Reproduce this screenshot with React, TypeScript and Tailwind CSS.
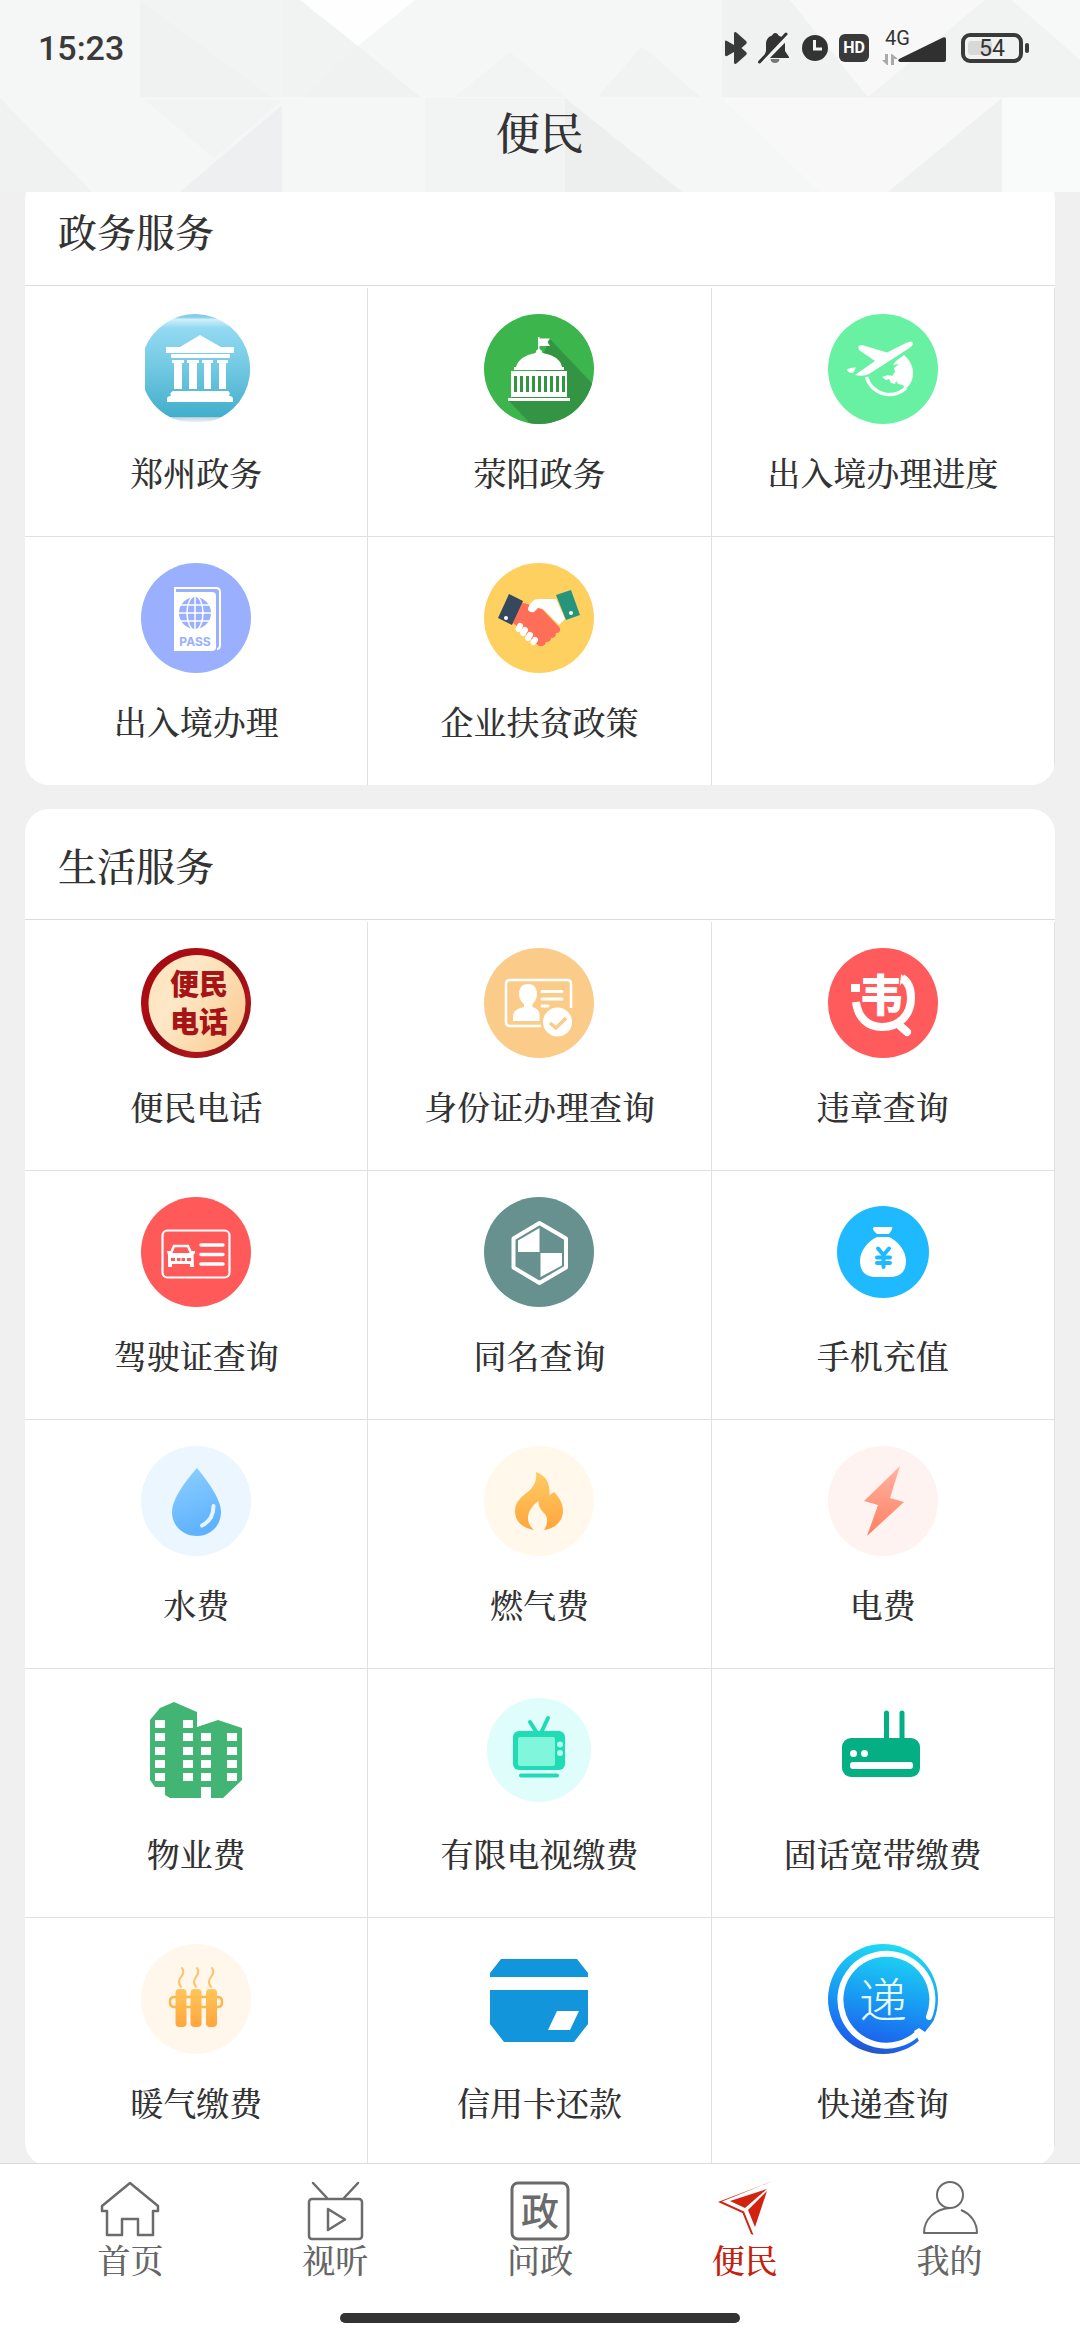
import type { ReactNode } from "react";

type Service = { label: string; icon: ReactNode };

const govServices: Service[] = [
  { label: "郑州政务", icon: <TempleIcon /> },
  { label: "荥阳政务", icon: <CapitolIcon /> },
  { label: "出入境办理进度", icon: <PlaneIcon /> },
  { label: "出入境办理", icon: <PassportIcon /> },
  { label: "企业扶贫政策", icon: <HandshakeIcon /> },
];

const lifeServices: Service[] = [
  { label: "便民电话", icon: <HotlineIcon /> },
  { label: "身份证办理查询", icon: <IdCardIcon /> },
  { label: "违章查询", icon: <ViolationIcon /> },
  { label: "驾驶证查询", icon: <LicenseIcon /> },
  { label: "同名查询", icon: <ShieldIcon /> },
  { label: "手机充值", icon: <MoneyBagIcon /> },
  { label: "水费", icon: <WaterIcon /> },
  { label: "燃气费", icon: <GasIcon /> },
  { label: "电费", icon: <PowerIcon /> },
  { label: "物业费", icon: <BuildingIcon /> },
  { label: "有限电视缴费", icon: <TvIcon /> },
  { label: "固话宽带缴费", icon: <RouterIcon /> },
  { label: "暖气缴费", icon: <HeatingIcon /> },
  { label: "信用卡还款", icon: <CreditCardIcon /> },
  { label: "快递查询", icon: <ExpressIcon /> },
];

const tabs = [
  { label: "首页", icon: <HomeTabIcon />, active: false },
  { label: "视听", icon: <VideoTabIcon />, active: false },
  { label: "问政", icon: <PoliticsTabIcon />, active: false },
  { label: "便民", icon: <ServiceTabIcon />, active: true },
  { label: "我的", icon: <MineTabIcon />, active: false },
];

export default function App() {
  return (
    <div className="flex h-screen flex-col overflow-hidden bg-[#f0f0f0] font-['Noto_Serif_CJK_SC','Noto_Sans_CJK_SC',serif] font-medium text-[#333]">
      <Header />
      <main className="min-h-0 flex-1 overflow-hidden px-[25px]">
        {/* list is scrolled a little, the first card starts under the header */}
        <div className="-mt-[17px] flex flex-col gap-6">
          <ServiceCard title="政务服务" items={govServices} />
          <ServiceCard title="生活服务" items={lifeServices} />
        </div>
      </main>
      <TabBar />
    </div>
  );
}

function Header() {
  return (
    <header className="relative z-10 h-48 shrink-0 bg-[#f5f6f6]">
      <HeaderPattern />
      <div className="relative flex h-24 items-center justify-between pl-[38px] pr-[51px]">
        <span className="font-[Roboto,sans-serif] text-[34px] font-medium leading-none text-[#3a3a3a]">15:23</span>
        <StatusIcons />
      </div>
      <h1 className="relative flex h-[70px] items-center justify-center text-[44px] leading-none">便民</h1>
    </header>
  );
}

function HeaderPattern() {
  return (
    <svg className="absolute inset-0 h-full w-full" viewBox="0 0 1080 192" preserveAspectRatio="none" aria-hidden="true">
      <g opacity="0.700">
        <path d="M140 0L272 97H140Z" fill="#eff0f0" />
        <path d="M282 0H300L358 46L303 97H282Z" fill="#f0f1f1" />
        <path d="M140 0H282V97H272Z" fill="#f2f3f3" />
        <path d="M358 46L420 97H303Z" fill="#eeefef" />
        <path d="M510 52L565 97H455Z" fill="#f1f2f2" />
        <path d="M642 46L700 97H598Z" fill="#f0f1f1" />
        <path d="M565 0H722V97Z" fill="#f6f7f7" />
        <path d="M722 0H790L868 97H722Z" fill="#eff0f0" />
        <path d="M790 0H985L868 97Z" fill="#fafafa" />
        <path d="M985 0L868 97H1080V60L1012 0Z" fill="#f0f1f1" />
        <path d="M1012 0H1080V60Z" fill="#f9f9f9" />
        <path d="M0 98L92 192H0Z" fill="#eff0f0" />
        <path d="M145 100H282L214 158Z" fill="#f1f2f2" />
        <path d="M282 105V192H180Z" fill="#ecedee" />
        <path d="M425 98H565V192H425Z" fill="#f2f3f3" />
        <path d="M565 98L682 192H565Z" fill="#eaebec" />
        <path d="M722 98H862L1002 98L888 192H820Z" fill="#fafafa" />
        <path d="M1002 98V192H888Z" fill="#edeeee" />
        <path d="M1002 98H1080V192H1002Z" fill="#fcfcfc" />
      </g>
      <path d="M300 0H415L358 46Z" fill="#fefefe" />
    </svg>
  );
}

function StatusIcons() {
  return (
    <div className="flex items-center font-[Roboto,sans-serif] font-normal text-[#333]">
      <svg className="mr-2.5 h-8 w-[23px]" viewBox="0 0 23 32" fill="#3a3a3a" aria-label="蓝牙">
        <path d="M9 1Q10 -1 12 1L21 9Q22.500 10.500 21 12L16.500 16L21 20Q22.500 21.500 21 23L12 31Q10 33 9 31V20L2 24Q0 24.500 0 23V9.500Q0 8 2 9L9 13Z" />
      </svg>
      <svg className="mr-3 h-8 w-8" viewBox="0 0 32 32" fill="#333" aria-label="静音">
        <path d="M17 1C19 1 20 2 20.500 3.500C25 5 27 8 27 13V19L31 25V26H6V25L8 19V12C8 7 11 4.500 14 3.500Q15 1 17 1Z" />
        <path d="M12.500 27H21.500Q21 31 17 31Q13 31 12.500 27Z" fill="#777" />
        <path d="M3 31.500L30 4" stroke="#f3f4f4" strokeWidth="5" />
        <path d="M1.500 30L28 2" stroke="#333" strokeWidth="3" strokeLinecap="round" />
      </svg>
      <svg className="mr-[11px] h-[26px] w-[26px]" viewBox="0 0 26 26" fill="none" aria-label="闹钟">
        <circle cx="13" cy="13" r="13" fill="#333" />
        <path d="M12.500 5V14H20" stroke="#f4f4f4" strokeWidth="3" />
      </svg>
      <span className="mr-3 flex h-7 w-[30px] items-center justify-center rounded-[6px] bg-[#3a3a3a] text-base font-bold leading-none text-white">
        HD
      </span>
      <span className="relative mr-[14px] block h-9 w-[66px]">
        <svg className="h-9 w-[66px]" viewBox="0 0 66 36" aria-hidden="true">
          <path d="M18 29L62 7.500Q65 6.500 65 9V30Q65 32 63 32H19Q16 31 18 29Z" fill="#303030" />
          <path d="M4 24H7V35H6L1 30H4ZM10 35V24H11L17 29H13V35Z" fill="#aaa" />
        </svg>
        <span className="absolute left-1 top-0 text-xl leading-4">4G</span>
      </span>
      <span className="relative flex h-[30px] w-[62px] items-center justify-center rounded-[9px] border-4 border-[#3a3a3a]">
        <span className="absolute inset-y-1 left-[3px] w-6 rounded-[3px] bg-[#d8d8d8]" />
        <span className="relative text-[23px] leading-none">54</span>
      </span>
      <span className="ml-0.5 h-[10px] w-1 rounded-[2px] bg-[#3a3a3a]" />
    </div>
  );
}

function ServiceCard({ title, items }: { title: string; items: Service[] }) {
  const blanks = (3 - (items.length % 3)) % 3;
  const lastRow = items.length + blanks - 3;

  return (
    <section className="overflow-hidden rounded-3xl bg-white">
      <div className="mb-0.5 border-b border-[#dcdcdc]">
        <h2 className="flex h-[110px] items-center px-[33px] text-[39px] leading-none">{title}</h2>
      </div>
      <div className="grid grid-cols-3">
        {items.map((item, i) => (
          <a
            key={item.label}
            href="#"
            className={`flex flex-col items-center border-r border-[#e0e0e0] pb-10 pt-[26px] ${i < lastRow ? "border-b" : ""}`}
          >
            <span className="block h-[110px] w-[110px]">{item.icon}</span>
            <span className="mt-6 whitespace-nowrap text-[33px] leading-[48px]">{item.label}</span>
          </a>
        ))}
        {Array.from({ length: blanks }, (_, i) => (
          <div key={i} className="border-r border-[#e0e0e0]" />
        ))}
      </div>
    </section>
  );
}

function TabBar() {
  return (
    <footer className="z-10 shrink-0 border-t border-[#d8dcdd] bg-white pb-[17px]">
      <nav className="flex px-7 pt-[17px]">
        {tabs.map((tab) => (
          <a
            key={tab.label}
            href="#"
            className={`flex flex-1 flex-col items-center ${tab.active ? "text-[#c9200e]" : "text-[#666]"}`}
          >
            {tab.icon}
            <span className="text-[33px] leading-9">{tab.label}</span>
          </a>
        ))}
      </nav>
      <div className="mx-auto mt-9 h-[10px] w-[400px] rounded-full bg-[#333]" />
    </footer>
  );
}

/* service icons, all on a 110 x 110 board */

function Board({ children }: { children: ReactNode }) {
  return (
    <svg className="h-full w-full" viewBox="0 0 110 110" fill="none" aria-hidden="true">
      {children}
    </svg>
  );
}

function TempleIcon() {
  return (
    <Board>
      <defs>
        <linearGradient id="temple" x1="0" y1="0" x2="0" y2="1">
          <stop offset="0" stopColor="#86c9e0" />
          <stop offset="0.030" stopColor="#86cfe8" />
          <stop offset="0.050" stopColor="#d0effa" />
          <stop offset="0.130" stopColor="#93d9f2" />
          <stop offset="0.500" stopColor="#72c8e2" />
          <stop offset="0.950" stopColor="#42aecb" />
          <stop offset="0.960" stopColor="#c4d8e2" />
          <stop offset="1" stopColor="#e8eef4" />
        </linearGradient>
      </defs>
      <path d="M55 0A55 55 0 0 1 77 105Q70 108 55 108Q40 108 33 105A55 55 0 0 1 4 76V34A55 55 0 0 1 55 0Z" fill="url(#temple)" />
      <g fill="#fff">
        <path d="M59 21L80 33H93V39H25V33H39Z" />
        <rect x="30" y="40" width="59" height="4" rx="1" />
        <path d="M31 46H43V49H41V75H33V49H31ZM46 46H58V49H56V75H48V49H46ZM61 46H72V49H70V75H63V49H61ZM76 46H87V49H85V75H78V49H76Z" />
        <path d="M32 77H87Q90 79 88 82Q92 82 92 85V88H26V85Q26 82 30 82Q28 79 32 77Z" />
      </g>
    </Board>
  );
}

function CapitolIcon() {
  const slots = [30, 36, 42, 48, 54, 60, 66, 72, 78];
  return (
    <Board>
      <clipPath id="capitolClip">
        <circle cx="55" cy="55" r="55" />
      </clipPath>
      <circle cx="55" cy="55" r="55" fill="#3cb54d" />
      <path d="M66 25L120 82V120H56L25 87L50 60Z" fill="#339444" clipPath="url(#capitolClip)" />
      <g fill="#fff">
        <path d="M54 23H55.500V24.500H66L63.500 28L66 32H55.500V35Q58 36 58.500 39Q76 42 78 53H80V56H30V53H32Q35 42 51.500 39Q52 36 54 35Z" />
        <path d="M27 57H83V83H27Z" />
        <path d="M24 84H86V87H24Z" />
      </g>
      {slots.map((x) => (
        <rect key={x} x={x} y="62" width="3" height="16" fill="#339444" />
      ))}
    </Board>
  );
}

function PlaneIcon() {
  return (
    <Board>
      <circle cx="55" cy="55" r="55" fill="#69f1a3" />
      <path d="M38.500 63A24 24 0 0 0 78 74" stroke="#fff" strokeWidth="3.500" />
      <path d="M76 41C85 48 88 61 82 70Q80 73 77 75L75 71L70 70L68 67L67 70L63 69L61 65L58 66L54 63L60 61L64 62L67 58L66 54L71 50L65 51L68 47Z" fill="#fff" />
      <g fill="#fff">
        <path d="M27 61L47 47L31 36Q29 31 34 31L59 38.500L78 29Q84 26 85 29Q85 32 80 35L41 60Q36 63 27 61Z" />
        <path d="M19 56Q19 54 28 53.500L25 59Q20 59 19 56Z" />
      </g>
    </Board>
  );
}

function PassportIcon() {
  return (
    <Board>
      <circle cx="55" cy="55" r="55" fill="#9ab0ff" />
      <path d="M34 29V25H75Q79 25 79 29V82Q79 86 76 86" stroke="#fff" strokeWidth="2" />
      <path d="M33 29H71Q75 29 75 33V84Q75 88 71 88H33Z" fill="#fff" />
      <circle cx="54" cy="50" r="16" fill="#9ab0ff" />
      <g stroke="#fff" strokeWidth="1.500">
        <path d="M37 50H71M39 42H69M39 58H69M54 33V67" />
        <ellipse cx="54" cy="50" rx="8" ry="17" />
      </g>
      <text x="54" y="83" textAnchor="middle" fontSize="12" fontWeight="700" fontFamily="Inter, sans-serif" fill="#9ab0ff">
        PASS
      </text>
    </Board>
  );
}

function HandshakeIcon() {
  return (
    <Board>
      <circle cx="55" cy="55" r="55" fill="#fed05f" />
      <path d="M36 39L50 43L58 46L76 65Q77 70 72 70Q72 75 67 75Q67 79 62 79Q61 84 55 83L34 64L29 60Z" fill="#ff6f57" />
      <path d="M50 37Q52 36 55 36H72L81 56L75 62L59 46L54 45L50 49Q46 50 44 47Q44 42 50 37Z" fill="#fff" />
      <path d="M25 31L39 38L28 62L14 55Z" fill="#34495e" />
      <path d="M72 32L87 27L96 52L82 57Z" fill="#27957c" />
      <circle cx="22" cy="55" r="2" fill="#fff" />
      <circle cx="87" cy="50" r="2" fill="#fff" />
      <g stroke="#fff" strokeWidth="6" strokeLinecap="round">
        <path d="M36 63L34.500 66M41 67L39 70M46 72L44 75M51 77L49.500 79" />
      </g>
    </Board>
  );
}

function HotlineIcon() {
  return (
    <Board>
      <defs>
        <linearGradient id="hotRing" x1="0" y1="0" x2="1" y2="1">
          <stop offset="0" stopColor="#980b0e" />
          <stop offset="0.300" stopColor="#b00d14" />
          <stop offset="0.500" stopColor="#8d0d10" />
          <stop offset="0.700" stopColor="#b2141a" />
          <stop offset="1" stopColor="#6e1010" />
        </linearGradient>
        <linearGradient id="hotFace" x1="0" y1="0" x2="1" y2="0.600">
          <stop offset="0" stopColor="#fee3bb" />
          <stop offset="0.400" stopColor="#fee8c8" />
          <stop offset="1" stopColor="#fbd09a" />
        </linearGradient>
      </defs>
      <circle cx="55" cy="55" r="55" fill="url(#hotRing)" />
      <circle cx="56" cy="55.500" r="48.500" fill="url(#hotFace)" />
      <text fontFamily="'Noto Sans CJK SC', sans-serif" fontSize="29" fontWeight="900" fill="#a61416">
        <tspan x="29" y="47">便民</tspan>
        <tspan x="29" y="85">电话</tspan>
      </text>
    </Board>
  );
}

function IdCardIcon() {
  return (
    <Board>
      <circle cx="55" cy="55" r="55" fill="#fbcc89" />
      <path d="M57 78H26Q22 78 22 74V36Q22 32 26 32H83Q87 32 87 36V60" stroke="#fff" strokeWidth="2.500" />
      <g fill="#fff">
        <path d="M44 36C50 36 53 40 53 46C53 51 50 55 48.500 56V59Q55 61 55.500 66V73H29V67Q30 61 40 59V56C37 54 35 50 35 46C35 40 38 36 44 36Z" />
        <circle cx="73.500" cy="74" r="14.500" />
      </g>
      <path d="M58 43.500H78M58 51H78M58 58H64" stroke="#fff" strokeWidth="3" strokeLinecap="round" />
      <path d="M66 75L72 80L82 70" stroke="#fbcc89" strokeWidth="3.500" />
    </Board>
  );
}

function ViolationIcon() {
  return (
    <Board>
      <circle cx="55" cy="55" r="55" fill="#ff5a5c" />
      <path d="M23 36H32V44H23Z" fill="#fff" />
      <path d="M28 54C30 70 40 79 54 79C72 79 83 66 83 50C83 40 79 33 74 30" stroke="#fff" strokeWidth="8" />
      <path d="M73 26L77 30L72 38Z" fill="#fff" />
      <path d="M70 76L79 84" stroke="#fff" strokeWidth="8" strokeLinecap="round" />
      <text x="53" y="64" textAnchor="middle" fontFamily="'Noto Sans CJK SC', sans-serif" fontSize="44" fontWeight="900" fill="#fff">
        韦
      </text>
    </Board>
  );
}

function LicenseIcon() {
  return (
    <Board>
      <circle cx="55" cy="55" r="55" fill="#ff5959" />
      <rect x="21.500" y="33.500" width="67" height="47" rx="5" stroke="#fff" strokeWidth="2.200" />
      <path d="M60 48H82M60 57.500H82M60 67H82" stroke="#fff" strokeWidth="3.500" strokeLinecap="round" />
      <path d="M30 56L33 49H47L50 56" stroke="#fff" strokeWidth="2.500" />
      <path d="M26 54H30V56H50V54H54V56L52.500 58L53 70H49V67H31V70H27V58Z" fill="#fff" />
      <path d="M30 61H34V64H30ZM36 61H44V64H36ZM46 61H50V64H46Z" fill="#ff5959" />
      <path d="M40 60V65" stroke="#fff" />
    </Board>
  );
}

function ShieldIcon() {
  return (
    <Board>
      <circle cx="55" cy="55" r="55" fill="#66918e" />
      <path d="M55.500 26L82 41.500V70.500L55.500 86L29.500 70.500V41.500Z" stroke="#fff" strokeWidth="4" strokeLinejoin="round" />
      <path d="M55.500 31V55H34V43.500ZM56.500 56H78V68.500L56.500 80Z" fill="#fff" />
    </Board>
  );
}

function MoneyBagIcon() {
  return (
    <Board>
      <circle cx="55" cy="55" r="46" fill="#1fb9ff" />
      <path d="M46 30H64Q65 31 63 34L61 37H49L46 34Q44 31 46 30ZM49 40H61C70 44 78 54 78 64C78 75 72 80 62 80H48C38 80 32 75 32 64C32 54 40 44 49 40Z" fill="#fff" />
      <path d="M50 51.500L55.500 58L61 51.500M55.500 58V70M49 60.500H62M49 66H62" stroke="#1fb9ff" strokeWidth="4" strokeLinecap="round" />
    </Board>
  );
}

function WaterIcon() {
  return (
    <Board>
      <linearGradient id="water" x1="0" y1="0" x2="0.300" y2="1">
        <stop offset="0" stopColor="#8fd0ff" />
        <stop offset="1" stopColor="#5fb2ff" />
      </linearGradient>
      <circle cx="55" cy="55" r="55" fill="#ebf6ff" />
      <path d="M56 22C64 32 80 52 80 66C80 80 69 90 56 90C42 90 31 80 31 66C31 52 47 32 56 22Z" fill="url(#water)" />
      <path d="M72.500 60C72.500 69 68 76 61 79.500" stroke="#e6f5ff" strokeWidth="4" strokeLinecap="round" />
    </Board>
  );
}

function GasIcon() {
  return (
    <Board>
      <linearGradient id="gas" x1="0" y1="0" x2="0" y2="1">
        <stop offset="0" stopColor="#ffcb66" />
        <stop offset="1" stopColor="#ffa63c" />
      </linearGradient>
      <circle cx="55" cy="55" r="55" fill="#fff8eb" />
      <path d="M52 26C62 30 66 36 65.500 49L70 46C76 52 79 58 79 65C79 75 71 83 60 84C64 78 64 72 61 68C58 65 54 61 54.500 55C49 59 44 65 44 72C44 77 46 80 50 84C38 82 31 75 31 65C31 55 38 51 46 44C51 39 53 33 52 26Z" fill="url(#gas)" />
    </Board>
  );
}

function PowerIcon() {
  return (
    <Board>
      <linearGradient id="power" x1="0" y1="0" x2="0" y2="1">
        <stop offset="0" stopColor="#ffb3a4" />
        <stop offset="1" stopColor="#ff7f60" />
      </linearGradient>
      <circle cx="55" cy="55" r="55" fill="#fff3f1" />
      <path d="M72 20L62 52L76 56L39 90L50 59L36 55Z" fill="url(#power)" />
    </Board>
  );
}

function BuildingIcon() {
  const rows = [25, 38, 52, 65, 78];
  return (
    <Board>
      <path d="M33 7L56 17V32L77 25L101 33V85L82 103H70V92H60V103H29L24 100V92H14L9 85V25L19 13Z" fill="#42b473" />
      {rows.map((y, i) => (
        <g key={y} fill="#fff">
          <path d={`M14 ${y}h10v8h-10zM42 ${y}h10v8h-10z`} />
          {i > 0 && <path d={`M60 ${y}h10v8h-10zM86 ${y}h10v8h-10z`} />}
        </g>
      ))}
    </Board>
  );
}

function TvIcon() {
  return (
    <Board>
      <circle cx="55" cy="55" r="52" fill="#defdfb" />
      <path d="M46 27L53 38M64 23L57 38" stroke="#1fdcb5" strokeWidth="4" strokeLinecap="round" />
      <rect x="29" y="36" width="52" height="39" rx="6" fill="#1fdcb5" />
      <rect x="34" y="42" width="37" height="29" rx="2" fill="#80f6dc" />
      <circle cx="76" cy="49.500" r="3" fill="#b0fbec" />
      <circle cx="76" cy="58" r="3" fill="#b0fbec" />
      <path d="M37 80.500H73" stroke="#1fdcb5" strokeWidth="4" strokeLinecap="round" />
    </Board>
  );
}

function RouterIcon() {
  return (
    <Board>
      <path d="M58.500 18V45M74 18V45" stroke="#04af83" strokeWidth="5" strokeLinecap="round" />
      <rect x="14" y="43" width="78" height="39" rx="9" fill="#04af83" />
      <circle cx="25.500" cy="58.500" r="3.500" fill="#fff" />
      <circle cx="36.500" cy="58.500" r="3.500" fill="#fff" />
      <rect x="22" y="67" width="63" height="7" rx="3" fill="#fff" />
    </Board>
  );
}

function HeatingIcon() {
  return (
    <Board>
      <linearGradient id="heat" x1="0" y1="0" x2="0" y2="1">
        <stop offset="0" stopColor="#ffc65a" />
        <stop offset="1" stopColor="#ffa53c" />
      </linearGradient>
      <circle cx="55" cy="55" r="55" fill="#fff7eb" />
      <path d="M34 53H33Q29 53 29 58Q29 63 33 63H77Q81 63 81 58Q81 53 77 53H34Z" stroke="#ffb64e" strokeWidth="2.500" />
      <g fill="url(#heat)">
        <rect x="34.500" y="45" width="11" height="38" rx="4" />
        <rect x="49.500" y="45" width="11" height="38" rx="4" />
        <rect x="65" y="45" width="11" height="38" rx="4" />
      </g>
      <path d="M41 24Q44 28 40 33Q36 38 40 43M56 24Q59 28 55 33Q51 38 55 43M71 24Q74 28 70 33Q66 38 70 43" stroke="#ffc164" strokeWidth="2" strokeLinecap="round" />
    </Board>
  );
}

function CreditCardIcon() {
  return (
    <Board>
      <path d="M17 15H93L104 29V33H6V29ZM6 46H104V80L90 98H20L6 80Z" fill="#1295db" />
      <path d="M73 67H95L86 86H64Z" fill="#fff" />
    </Board>
  );
}

function ExpressIcon() {
  return (
    <Board>
      <linearGradient id="express" x1="0.600" y1="0" x2="0.400" y2="1">
        <stop offset="0" stopColor="#1fdcf3" />
        <stop offset="0.500" stopColor="#189cf3" />
        <stop offset="0.900" stopColor="#1b62ee" />
        <stop offset="1" stopColor="#2a55b8" />
      </linearGradient>
      <circle cx="55" cy="55" r="55" fill="url(#express)" />
      <path d="M101 73A46 46 0 1 0 89 90" stroke="#fff" strokeWidth="6" strokeLinecap="round" />
      <path d="M91 97L86 87L91 84L97 88L104 79L112 70V102H94Z" fill="#fff" />
      <text x="55" y="74" textAnchor="middle" fontFamily="'Noto Sans CJK SC', sans-serif" fontSize="48" fontWeight="300" fill="#e9fbff">
        递
      </text>
    </Board>
  );
}

/* tab bar icons */

function TabSvg({ children }: { children: ReactNode }) {
  return (
    <svg className="h-[60px] w-[60px]" viewBox="0 0 60 60" fill="none" stroke="#6b6b6b" strokeWidth="2.500" strokeLinejoin="round" aria-hidden="true">
      {children}
    </svg>
  );
}

function HomeTabIcon() {
  return (
    <TabSvg>
      <path d="M30 2L58 25V30H53V54H38V38H22V54H7V30H2V25Z" />
    </TabSvg>
  );
}

function VideoTabIcon() {
  return (
    <TabSvg>
      <rect x="4" y="18" width="53" height="40" rx="3" />
      <path d="M8 2L22 17M53 2L39 17" strokeLinecap="round" />
      <path d="M23 28L40 38.500L23 49Z" />
    </TabSvg>
  );
}

function PoliticsTabIcon() {
  return (
    <TabSvg>
      <rect x="2" y="2" width="56" height="56" rx="6" strokeWidth="3" />
      <text x="30" y="44" textAnchor="middle" fontFamily="'Noto Sans CJK SC', sans-serif" fontSize="38" stroke="none" fill="#6b6b6b">
        政
      </text>
    </TabSvg>
  );
}

function ServiceTabIcon() {
  return (
    <TabSvg>
      <g fill="#d1230f" stroke="none">
        <path d="M58 0L7 20.500L29 30.500L38.500 54L36 53L27.500 32L3 21Z" />
        <path d="M52 8L15 20L30 27Z" />
        <path d="M52 10L33 29L40 46Z" />
      </g>
    </TabSvg>
  );
}

function MineTabIcon() {
  return (
    <TabSvg>
      <circle cx="30" cy="14" r="13" strokeWidth="2" />
      <path d="M30 27C15 28 4 38 4 52H57C57 42 51 33 41 29" strokeWidth="2" />
    </TabSvg>
  );
}
